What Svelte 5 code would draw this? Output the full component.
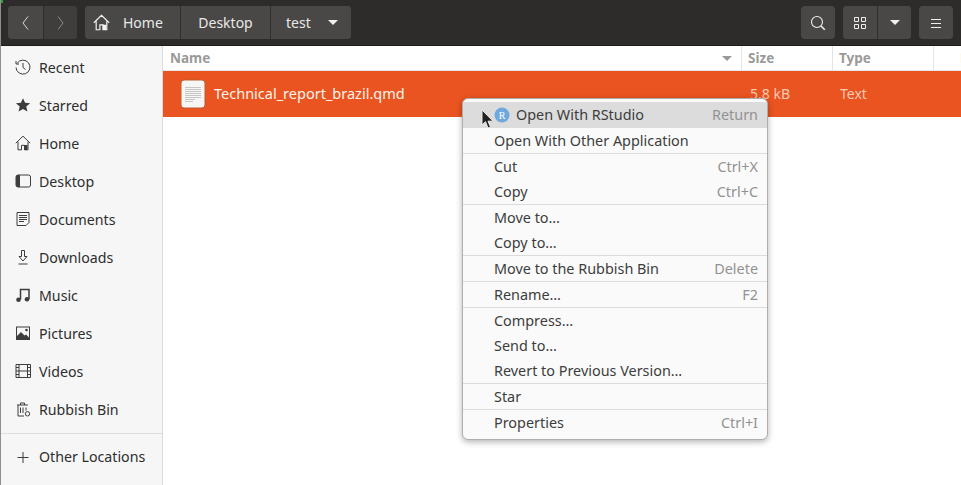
<script>
  const places = [
    ['Recent', 'recent'], ['Starred', 'star'], ['Home', 'home'], ['Desktop', 'desktop'], ['Documents', 'docs'],
    ['Downloads', 'down'], ['Music', 'music'], ['Pictures', 'pics'], ['Videos', 'video'], ['Rubbish Bin', 'bin']
  ];
  const menu = [
    [['Open With RStudio', 'Return', true], ['Open With Other Application', '']],
    [['Cut', 'Ctrl+X'], ['Copy', 'Ctrl+C']],
    [['Move to…', ''], ['Copy to…', '']],
    [['Move to the Rubbish Bin', 'Delete']],
    [['Rename…', 'F2']],
    [['Compress…', ''], ['Send to…', ''], ['Revert to Previous Version…', '']],
    [['Star', '']],
    [['Properties', 'Ctrl+I']]
  ];
</script>

{#snippet icon(n)}
  <svg class="ic" width="16" height="16" viewBox="0 0 16 16" fill="none" stroke="#3d3d3d" stroke-width="1">
    {#if n === 'recent'}
      <path d="M2.200 4.200A7 7 0 1 1 1 8.500M1 2v3h3M8 4v4.500l2.500 2" />
    {:else if n === 'star'}
      <path fill="#3d3d3d" stroke="none" d="M8 1.200l2.100 4.600 5 .5-3.800 3.300 1.100 5L8 12l-4.400 2.600 1.100-5L.9 6.300l5-.5z" />
    {:else if n === 'home'}
      <path d="M.8 8.200L8 1.200l7.200 7M3 6.800v8h3.500v-4.500h3v4.500h3.500v-8" /><path fill="#3d3d3d" stroke="none" d="M9 10h3.500v5H9z"/>
    {:else if n === 'desktop'}
      <rect x="1" y="2" width="14.500" height="12" rx="2" /><path fill="#3d3d3d" stroke="none" d="M3 2h2v12H3a2 2 0 0 1-2-2V4a2 2 0 0 1 2-2z"/>
    {:else if n === 'docs'}
      <path d="M2 1.500h12v10l-3 3H2zM4 4.500h8M4 6.500h8M4 8.500h8M4 10.500h5" />
    {:else if n === 'down'}
      <path d="M6.500 1.500h3v6h2.500L8 12 4 7.500h2.500zM3.500 15h9" />
    {:else if n === 'music'}
      <path stroke-width="1.500" d="M5.500 12.500V2.500h8.500v9.500" /><circle fill="#3d3d3d" stroke="none" cx="3.500" cy="12.800" r="2.300"/><circle fill="#3d3d3d" stroke="none" cx="12" cy="12.300" r="2.300"/>
    {:else if n === 'pics'}
      <rect x="1.500" y="2" width="13" height="12.500" /><path fill="#3d3d3d" stroke="none" d="M1 14.500V12l5-5 3.500 3.500L11 9.500l4 4v1z"/><circle fill="#3d3d3d" stroke="none" cx="11.500" cy="5" r="1.300"/>
    {:else if n === 'video'}
      <path d="M1 1.500h14.500v13H1zM4 1.500v13M12.500 1.500v13M4 8h8.500M1 4.500h3M1 8h3M1 11.500h3M12.500 4.500h3M12.500 8h3M12.500 11.500h3" />
    {:else if n === 'bin'}
      <path d="M2 4h11M5.500 4V2h4v2M3 4v11h6M5.500 6.500v5.500M8 6.500v5.500M11 6.500v3" /><circle cx="12.500" cy="12.800" r="2.200"/>
    {/if}
  </svg>
{/snippet}

<div class="win">
  <span class="corner"></span>
  <header class="bar">
    <div class="group nav">
      <button class="btn nb" aria-label="Back">
        <svg width="9" height="16" viewBox="0 0 9 16" fill="none" stroke="#d8d8d6" stroke-width="1"><path d="M7 1.500L2 8l5 6.500" /></svg>
      </button>
      <button class="btn nb dim" aria-label="Forward">
        <svg width="9" height="16" viewBox="0 0 9 16" fill="none" stroke="#8b8a87" stroke-width="1"><path d="M2 1.500L7 8l-5 6.500" /></svg>
      </button>
    </div>
    <div class="group crumbs">
      <button class="btn c1">
        <svg width="17" height="17" viewBox="0 0 16 16" fill="none" stroke="#f2f2f2" stroke-width="1.100"><path d="M.8 8.200L8 1.200l7.200 7M3 6.800v8h3.500v-4.500h3v4.500h3.500v-8" /><path fill="#f2f2f2" stroke="none" d="M9 10h3.500v5H9z"/></svg>
        <span>Home</span>
      </button>
      <button class="btn c2">Desktop</button>
      <button class="btn c3"><span>test</span><i class="caret light"></i></button>
    </div>
    <div class="right">
      <button class="btn single" aria-label="Search">
        <svg width="16" height="16" viewBox="0 0 16 16" fill="none" stroke="#f0f0f0" stroke-width="1.100"><circle cx="7" cy="7" r="5.500"/><path d="M11 11l3.800 3.800" stroke-width="1.600"/></svg>
      </button>
      <div class="group">
        <button class="btn single" aria-label="View">
          <svg width="14" height="14" viewBox="0 0 14 14" fill="none" stroke="#f0f0f0"><path d="M1.500 1.500h4v4h-4zM8.500 1.500h4v4h-4zM1.500 8.500h4v4h-4zM8.500 8.500h4v4h-4z"/></svg>
        </button>
        <button class="btn single" aria-label="Options"><i class="caret light"></i></button>
      </div>
      <button class="btn single" aria-label="Menu">
        <svg width="12" height="10" viewBox="0 0 12 10" stroke="#f0f0f0"><path d="M1 1.500h10M1 5.500h10M1 9.500h10"/></svg>
      </button>
    </div>
  </header>

  <div class="body">
    <nav class="side">
      <ul>
        {#each places as [label, n]}
          <li>{@render icon(n)}<span>{label}</span></li>
        {/each}
      </ul>
      <div class="rule"></div>
      <div class="other">
        <svg class="ic" width="16" height="16" viewBox="0 0 16 16" stroke="#3d3d3d"><path d="M2.500 8.500h11M8 3v11"/></svg>
        <span>Other Locations</span>
      </div>
    </nav>

    <main class="list">
      <div class="cols">
        <div class="col name">Name<i class="caret grey"></i></div>
        <div class="col size">Size</div>
        <div class="col type">Type</div>
        <div class="col last">Modified</div>
      </div>
      <div class="row">
        <div class="fname">
          <svg width="26" height="30" viewBox="0 0 26 30">
            <rect x="1" y="1" width="24" height="28" rx="3" fill="#f6f6f4" stroke="#bf5a30"/>
            <path d="M5 8.500h16M5 10.500h16M5 12.500h16M5 14.500h16M5 16.500h16M5 18.500h16M5 20.500h10M5 22.500h8" stroke="#c6c6c4"/>
          </svg>
          <span class="t">Technical_report_brazil.qmd</span>
        </div>
        <div class="fsize t">5.8 kB</div>
        <div class="ftype t">Text</div>
      </div>
    </main>
  </div>

  <div class="menu">
    {#each menu as section, s}
      {#if s > 0}<div class="sep"></div>{/if}
      {#each section as [label, key, active]}
        <div class="item" class:active>
          {#if active}
            <svg class="r" width="16" height="16" viewBox="0 0 16 16"><circle cx="8" cy="8" r="7.500" fill="#6fa8dc"/><text x="8" y="11.500" text-anchor="middle" font-size="10" fill="#fff" font-family="Liberation Serif">R</text></svg>
          {/if}
          <span>{label}</span>
          {#if key}<em>{key}</em>{/if}
        </div>
      {/each}
    {/each}
  </div>

  <svg class="cursor" width="13" height="21" viewBox="0 0 13 21"><path d="M1 1v15l3.500-3.300L7 19l2.500-1-2.500-5.800h5z" fill="#222" stroke="#e8e8e8"/></svg>
</div>

<style>
  :global(body) { margin: 0; background: #fff; }
  .win { position: relative; width: 961px; height: 485px; overflow: hidden; font-family: "Noto Sans", sans-serif; font-size: 14px; color: #2e2e2e; border-left: 1px solid #8f8f8f; box-sizing: border-box; }
  .corner { position: absolute; left: -1px; top: 0; width: 3px; height: 3px; background: #2f9e3f; }
  .bar { height: 46px; box-sizing: border-box; background: #2d2c2b; border-bottom: 1px solid #1d1c1b; display: flex; align-items: center; padding: 0 8px 0 7px; gap: 8px; }
  button { font: inherit; color: #e8e8e6; border: 0; margin: 0; padding: 0; background: none; }
  .group { display: flex; height: 33px; border-radius: 4px; overflow: hidden; background: #4a4846; box-shadow: inset 0 0 0 1px #3b3a38; }
  .btn { display: flex; align-items: center; justify-content: center; height: 33px; background: #4a4846; border-radius: 0; }
  .nb { width: 35px; }
  .nb + .nb { width: 34px; border-left: 1px solid #2f2e2d; }
  .dim { background: #403e3c; }
  .c1 { width: 95px; gap: 13px; justify-content: flex-start; padding-left: 8px; box-sizing: border-box; }
  .c2 { width: 90px; border-left: 1px solid #2f2e2d; }
  .c3 { width: 81px; border-left: 1px solid #2f2e2d; gap: 17px; justify-content: flex-start; padding-left: 15px; box-sizing: border-box; }
  .right { margin-left: auto; display: flex; gap: 8px; }
  .single { width: 34px; border-radius: 4px; }
  .group .single { border-radius: 0; }
  .group .single + .single { border-left: 1px solid #2f2e2d; }
  .caret { display: block; width: 0; height: 0; border-left: 5px solid transparent; border-right: 5px solid transparent; }
  .caret.light { border-top: 5px solid #f0f0f0; }
  .caret.grey { border-top: 5px solid #9a9a98; margin-left: auto; margin-right: 9px; }
  .body { display: flex; height: 439px; }
  .side { width: 162px; flex: none; box-sizing: border-box; background: #f6f6f6; border-right: 1px solid #dadada; font-size: 14.2px; }
  ul { list-style: none; margin: 0; padding: 2px 0 0; }
  li { display: flex; align-items: center; height: 38px; padding-left: 14px; }
  .other { display: flex; align-items: center; height: 45px; padding-left: 14px; }
  .ic { margin-right: 8px; flex: none; }
  .rule { height: 1px; background: #dedede; margin-top: 5px; }
  .list { flex: 1; min-width: 0; overflow: hidden; }
  .cols { display: flex; height: 25px; box-sizing: border-box; border-bottom: 1px solid #e6e6e6; color: #9a9a98; font-weight: 700; font-size: 13.5px; }
  .col { display: flex; align-items: center; padding-left: 7px; box-sizing: border-box; }
  .name { width: 578px; }
  .size { width: 91px; border-left: 1px solid #e4e4e4; padding-left: 6px; }
  .type { width: 101px; border-left: 1px solid #e4e4e4; padding-left: 6px; }
  .last { flex: 1; border-left: 1px solid #e4e4e4; padding-left: 26px; white-space: nowrap; overflow: hidden; }
  .row { height: 46px; background: #e95420; color: #f8c9b4; display: flex; align-items: center; }
  .t { margin-bottom: 2px; }
  .fname { width: 578px; display: flex; align-items: center; gap: 8px; padding-left: 17px; box-sizing: border-box; color: #fff3ec; font-size: 14.5px; }
  .fsize { width: 91px; padding-left: 9px; box-sizing: border-box; }
  .ftype { padding-left: 8px; }
  .menu { position: absolute; left: 461px; top: 98px; width: 306px; height: 342px; box-sizing: border-box; background: #fafafa; border: 1px solid #b0aeab; border-radius: 6px; padding: 3px 0; box-shadow: 0 2px 6px rgba(0,0,0,.3); color: #3d3d3d; font-size: 14.4px; }
  .item { display: flex; align-items: center; height: 25px; padding: 0 9px 0 31px; }
  .item.active { background: #dcdcdc; height: 25px; padding-bottom: 1px; }
  .item em { margin-left: auto; font-style: normal; color: #929292; font-size: 14.4px; }
  .r { margin-right: 6px; }
  .sep { height: 1px; background: #dcdcdc; }
  .cursor { position: absolute; left: 480px; top: 109px; }
</style>
